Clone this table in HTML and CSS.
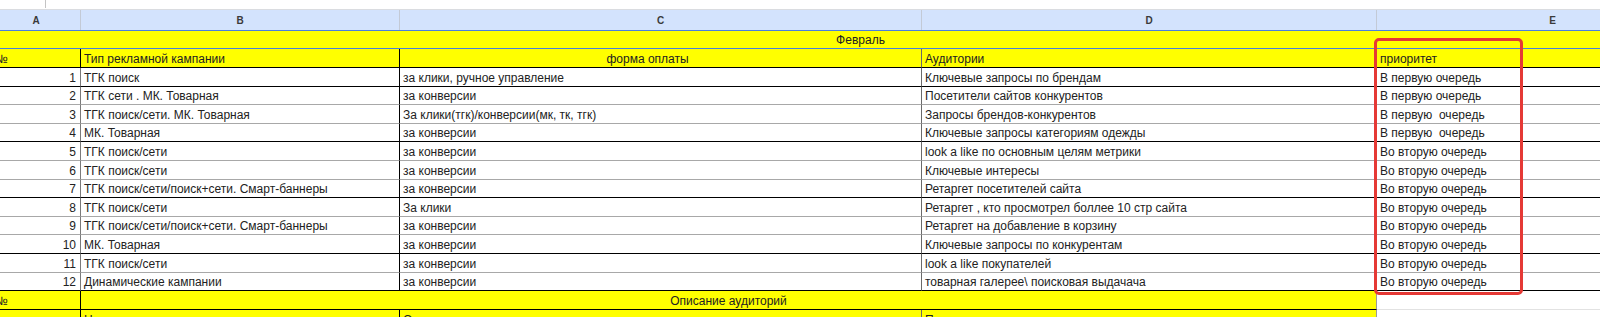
FILE: index.html
```html
<!DOCTYPE html>
<html lang="ru">
<head>
<meta charset="utf-8">
<title>Февраль — план кампаний</title>
<link rel="stylesheet" href="styles.css">
</head>
<body>
<div class="page">
  <div class="toolbar"><span class="toolbar-sep"></span></div>
  <div class="sheet">
    <div class="row colhead">
      <div class="hcell">A</div>
      <div class="hcell">B</div>
      <div class="hcell">C</div>
      <div class="hcell">D</div>
      <div class="hcell">E</div>
    </div>
    <div class="row feb">
      <div class="cell span-all center">Февраль</div>
    </div>
    <div class="row yhead bk">
      <div class="cell ca">№</div>
      <div class="cell cb">Тип рекламной кампании</div>
      <div class="cell cc center pay">форма оплаты</div>
      <div class="cell cd">Аудитории</div>
      <div class="cell ce">приоритет</div>
    </div>
    <div class="row bk">
      <div class="cell ca num">1</div>
      <div class="cell cb">ТГК поиск</div>
      <div class="cell cc">за клики, ручное управление</div>
      <div class="cell cd">Ключевые запросы по брендам</div>
      <div class="cell ce">В первую очередь</div>
    </div>
    <div class="row gr">
      <div class="cell ca num">2</div>
      <div class="cell cb">ТГК сети . МК. Товарная</div>
      <div class="cell cc">за конверсии</div>
      <div class="cell cd">Посетители сайтов конкурентов</div>
      <div class="cell ce">В первую очередь</div>
    </div>
    <div class="row gr">
      <div class="cell ca num">3</div>
      <div class="cell cb">ТГК поиск/сети. МК. Товарная</div>
      <div class="cell cc">За клики(тгк)/конверсии(мк, тк, тгк)</div>
      <div class="cell cd">Запросы брендов-конкурентов</div>
      <div class="cell ce">В первую  очередь</div>
    </div>
    <div class="row bk">
      <div class="cell ca num">4</div>
      <div class="cell cb">МК. Товарная</div>
      <div class="cell cc">за конверсии</div>
      <div class="cell cd">Ключевые запросы категориям одежды</div>
      <div class="cell ce">В первую  очередь</div>
    </div>
    <div class="row gr">
      <div class="cell ca num">5</div>
      <div class="cell cb">ТГК поиск/сети</div>
      <div class="cell cc">за конверсии</div>
      <div class="cell cd">look a like по основным целям метрики</div>
      <div class="cell ce">Во вторую очередь</div>
    </div>
    <div class="row gr">
      <div class="cell ca num">6</div>
      <div class="cell cb">ТГК поиск/сети</div>
      <div class="cell cc">за конверсии</div>
      <div class="cell cd">Ключевые интересы</div>
      <div class="cell ce">Во вторую очередь</div>
    </div>
    <div class="row bk">
      <div class="cell ca num">7</div>
      <div class="cell cb">ТГК поиск/сети/поиск+сети. Смарт-баннеры</div>
      <div class="cell cc">за конверсии</div>
      <div class="cell cd">Ретаргет посетителей сайта</div>
      <div class="cell ce">Во вторую очередь</div>
    </div>
    <div class="row gr">
      <div class="cell ca num">8</div>
      <div class="cell cb">ТГК поиск/сети</div>
      <div class="cell cc">За клики</div>
      <div class="cell cd">Ретаргет , кто просмотрел боллее 10 стр сайта</div>
      <div class="cell ce">Во вторую очередь</div>
    </div>
    <div class="row gr">
      <div class="cell ca num">9</div>
      <div class="cell cb">ТГК поиск/сети/поиск+сети. Смарт-баннеры</div>
      <div class="cell cc">за конверсии</div>
      <div class="cell cd">Ретаргет на добавление в корзину</div>
      <div class="cell ce">Во вторую очередь</div>
    </div>
    <div class="row bk">
      <div class="cell ca num">10</div>
      <div class="cell cb">МК. Товарная</div>
      <div class="cell cc">за конверсии</div>
      <div class="cell cd">Ключевые запросы по конкурентам</div>
      <div class="cell ce">Во вторую очередь</div>
    </div>
    <div class="row gr">
      <div class="cell ca num">11</div>
      <div class="cell cb">ТГК поиск/сети</div>
      <div class="cell cc">за конверсии</div>
      <div class="cell cd">look a like покупателей</div>
      <div class="cell ce">Во вторую очередь</div>
    </div>
    <div class="row bk">
      <div class="cell ca num">12</div>
      <div class="cell cb">Динамические кампании</div>
      <div class="cell cc">за конверсии</div>
      <div class="cell cd">товарная галерее\ поисковая выдачача</div>
      <div class="cell ce">Во вторую очередь</div>
    </div>
    <div class="row opis">
      <div class="cell ca yl">№</div>
      <div class="cell span-bd yl center">Описание аудиторий</div>
      <div class="cell ce plain"></div>
    </div>
    <div class="row last">
      <div class="cell ca yl"></div>
      <div class="cell cb yl">Название</div>
      <div class="cell cc yl">Описание</div>
      <div class="cell cd yl">Примеры</div>
      <div class="cell ce plain"></div>
    </div>
  </div>
  <div class="focus"></div>
</div>
</body>
</html>
```

FILE: styles.css
```css
html, body {
  margin: 0;
  padding: 0;
  background: #ffffff;
  overflow: hidden;
}

body {
  width: 1600px;
  height: 317px;
  font-family: "Liberation Sans", Arial, sans-serif;
}

.page {
  position: relative;
  width: 1600px;
  height: 317px;
  overflow: hidden;
}

.toolbar {
  height: 9px;
  border-bottom: 1px solid #dadce0;
  display: flex;
}

.toolbar-sep {
  width: 1px;
  height: 8px;
  margin-left: 45px;
  background: #c4c4c4;
}

.sheet {
  margin-left: -8px;
  width: 1737px;
}

.row {
  display: grid;
  grid-template-columns: 89px 319px 522px 455px 352px;
  height: 18.6px;
}

.cell {
  box-sizing: border-box;
  display: flex;
  align-items: flex-end;
  padding: 0 3px 1px 3px;
  font-size: 12px;
  line-height: 14px;
  color: #222222;
  white-space: pre;
  overflow: hidden;
  min-width: 0;
}

.center { justify-content: center; }
.num { justify-content: flex-end; padding-right: 4px; }

.ca { border-right: 1px solid #7a7a7a; }
.cb { border-right: 1px solid #000000; }
.cc { border-right: 1px solid #6a6a6a; }
.cd { border-right: 1px solid #9a9a9a; }

.bk .cell { border-bottom: 1px solid #000000; }
.gr .cell { border-bottom: 1px solid #a8a8a8; }

/* column header */
.colhead {
  height: 20px;
  background: #d3e3fd;
}

.hcell {
  box-sizing: border-box;
  display: flex;
  align-items: center;
  justify-content: center;
  border-right: 1px solid #c3cad6;
  font-size: 10px;
  font-weight: bold;
  color: #3a3a3a;
}

/* February banner */
.feb {
  height: 19px;
  box-sizing: border-box;
  border-top: 1px solid #4a7fdc;
  border-bottom: 1px solid #4a7fdc;
  background: #ffff00;
}

.feb .cell { padding-bottom: 1px; }

.span-all { grid-column: 1 / -1; }
.span-bd { grid-column: 2 / 5; border-right: 1px solid #9a9a9a; }

.yhead {
  height: 19px;
  background: #ffff00;
}

.yhead .ca { border-right-color: #000000; }

.pay { padding-right: 29px; }

.yl { background: #ffff00; }

.opis .cell { border-bottom: 1px solid #000000; }
.opis .ca { border-right-color: #000000; }
.opis .plain { border-bottom-color: #e2e2e2; }

.last { height: 10px; }
.last .ca { border-right-color: #000000; }
.last .cell { align-items: flex-start; padding-top: 3px; }

/* red highlight frame over the priority column */
.focus {
  position: absolute;
  left: 1374px;
  top: 38px;
  width: 149px;
  height: 257px;
  box-sizing: border-box;
  border: 3px solid #e53935;
  border-radius: 5px;
}
```
